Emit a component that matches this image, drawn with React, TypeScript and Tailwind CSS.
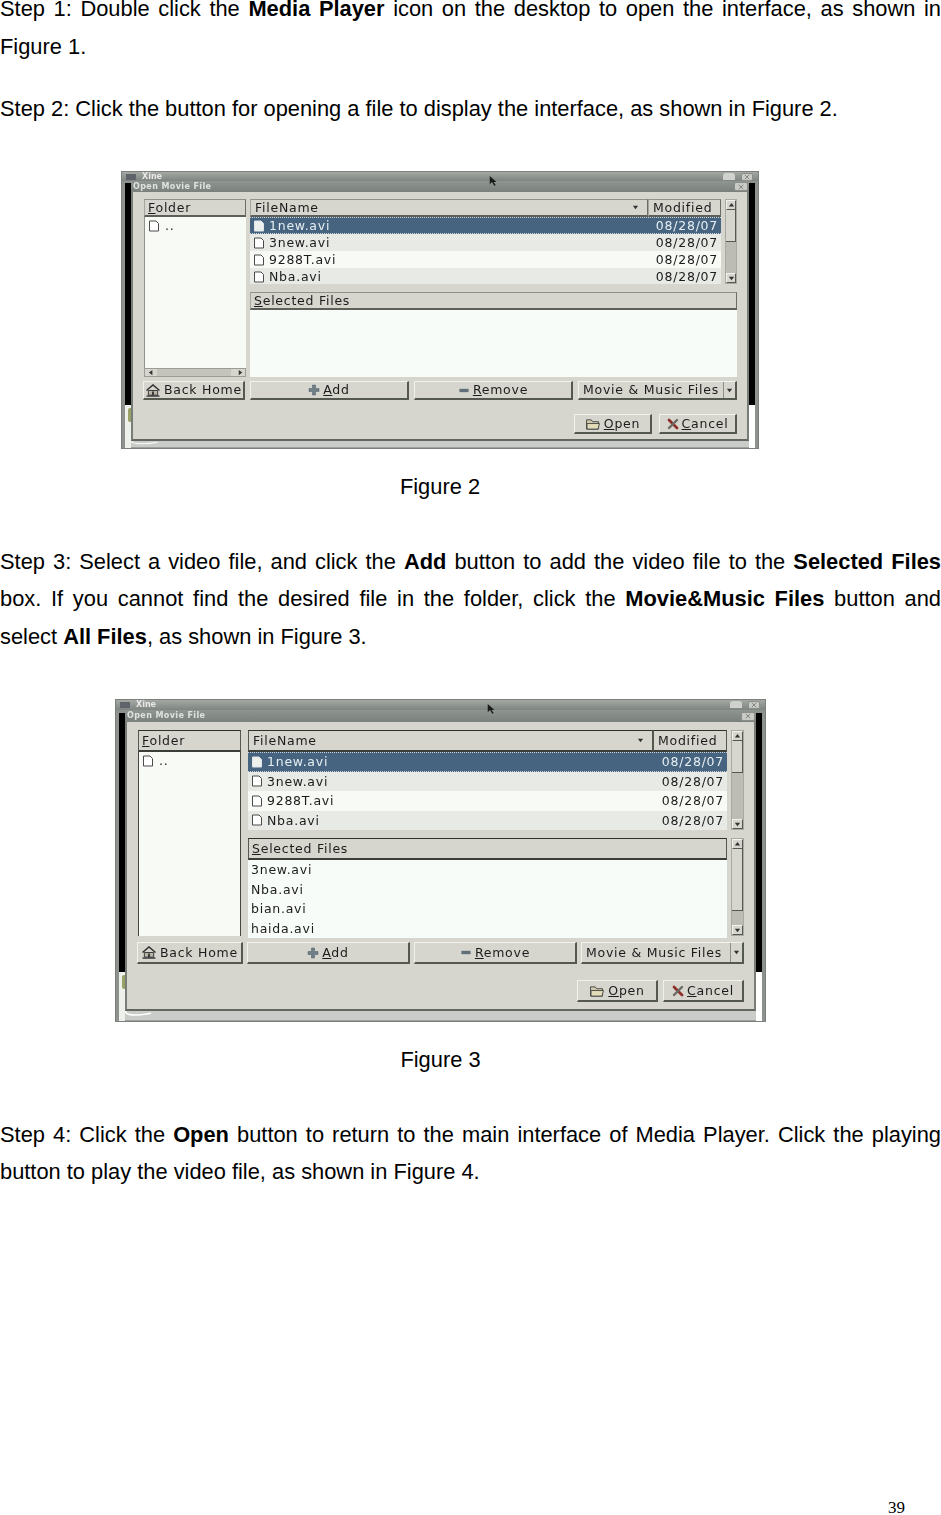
import type { ReactNode } from 'react'

type FigureStyle = {
  frame: string
  xineBar: string
  xineButtons: string
  titleBar: string
  body: string
  columns: string
  folderCol: string
  header: string
  headerCell: string
  listEdge: string
  row: string
  fileList: string
  modifiedCol: string
  upperPane: string
  lowerPane: string
  buttonRow: string
  backHome: string
  wideButton: string
  footer: string
  footerButton: string
  scrollbar: string
  strip: string
  paneGap: string
  bottomBand: string
}

const figureTwo: FigureStyle = {
  frame: 'w-[638px] h-[278px]',
  xineBar: 'h-[9px] pr-[5px]',
  xineButtons: 'gap-[6px]',
  titleBar: 'h-[11px] pr-[1px]',
  body: 'pl-[11px] pr-[10px] pt-[7px]',
  columns: 'gap-[4px]',
  folderCol: 'w-[102px]',
  header: 'h-[18px]',
  headerCell:
    'border-t border-l border-t-[#8f918a] border-l-[#a5a79f] border-r border-b-2 border-r-[#6a6d66] border-b-[#5d6059] bg-[#d6d5ce]',
  listEdge: 'border-l border-[#8f918a]',
  row: 'h-[17px]',
  fileList: 'w-[471px]',
  modifiedCol: 'w-[73px]',
  upperPane: 'h-[85px]',
  lowerPane: 'h-[85px]',
  buttonRow: 'h-[19px] mt-[4px] -ml-[1px] gap-[5px]',
  backHome: 'w-[102px]',
  wideButton: 'w-[159px]',
  footer: 'mt-[14px] gap-[7px]',
  footerButton: 'w-[78px] h-[20px]',
  scrollbar: 'w-[12px]',
  strip: 'mt-[2px] h-[222px]',
  paneGap: 'gap-[8px]',
  bottomBand: 'h-[7px]',
}

const figureThree: FigureStyle = {
  frame: 'w-[651px] h-[323px]',
  xineBar: 'h-[10px] pr-[5px]',
  xineButtons: 'gap-[6px]',
  titleBar: 'h-[12px] pr-[1px]',
  body: 'pl-[11px] pr-[10px] pt-[8px]',
  columns: 'gap-[7px]',
  folderCol: 'w-[103px]',
  header: 'h-[22px]',
  headerCell:
    'border-t border-l border-t-[#2f312d] border-l-[#55584f] border-r border-b-2 border-r-[#55584f] border-b-[#3a3d38] bg-[#d6d5ce]',
  listEdge: 'border-x border-[#44473f]',
  row: 'h-[19.5px]',
  fileList: 'w-[479px]',
  modifiedCol: 'w-[74px]',
  upperPane: 'h-[100px]',
  lowerPane: 'h-[98px]',
  buttonRow: 'h-[22px] mt-[6px] -ml-[1px] gap-[4px]',
  backHome: 'w-[106px]',
  wideButton: 'w-[163px]',
  footer: 'mt-[16px] gap-[5px]',
  footerButton: 'w-[81px] h-[22px]',
  scrollbar: 'w-[13px]',
  strip: 'mt-[3px] h-[259px]',
  paneGap: 'gap-[8px]',
  bottomBand: 'h-[10px]',
}

const raised = 'border-t border-l border-t-[#f2f2ec] border-l-[#f2f2ec] border-r-2 border-b-2 border-r-[#55584f] border-b-[#55584f]'

function DocIcon({ light }: { light?: boolean }) {
  return (
    <svg viewBox="0 0 12 12" className="size-[12px] shrink-0">
      <path
        d="M1.5 1h6.5l2.5 2.5V11h-9z"
        fill={light ? '#eef0ee' : '#ffffff'}
        stroke={light ? '#dfe5e8' : '#4a4a4a'}
        strokeWidth="1"
      />
    </svg>
  )
}

function HomeIcon() {
  return (
    <svg viewBox="0 0 16 14" className="h-[13px] w-[16px] shrink-0">
      <path d="M1 7L8 1l7 6" fill="none" stroke="#333" strokeWidth="1.6" />
      <path d="M3 7h10v5H3z" fill="#b9b6a8" stroke="#333" />
      <path d="M1 13h14" stroke="#333" strokeWidth="1.4" />
      <path d="M7 8h2v4H7z" fill="#333" />
    </svg>
  )
}

function PlusIcon() {
  return (
    <svg viewBox="0 0 12 12" className="size-[12px] shrink-0">
      <path d="M4.5 1h3v3.5H11v3H7.500V11h-3V7.500H1v-3h3.500z" fill="#6f8088" stroke="#4d5a60" strokeWidth="0.5" />
    </svg>
  )
}

function MinusIcon() {
  return (
    <svg viewBox="0 0 12 6" className="h-[5px] w-[12px] shrink-0">
      <path d="M0.500 1h11v4H0.500z" fill="#5f6f78" />
    </svg>
  )
}

function FolderIcon() {
  return (
    <svg viewBox="0 0 16 13" className="h-[12px] w-[16px] shrink-0">
      <path d="M1 2h5l1.500 2H14v8H1z" fill="#cfc9a8" stroke="#444" />
      <path d="M1.500 6H15l-1.500 6H1.500z" fill="#e3dcb8" stroke="#444" />
    </svg>
  )
}

function CancelIcon() {
  return (
    <svg viewBox="0 0 12 12" className="size-[12px] shrink-0">
      <path d="M2 2l8 8" stroke="#8f2f2a" strokeWidth="2.800" strokeLinecap="round" />
      <path d="M10 2l-8 8" stroke="#6b6b68" strokeWidth="2.400" strokeLinecap="round" />
    </svg>
  )
}

function WindowClose({ className }: { className: string }) {
  return (
    <span className={`flex items-center justify-center rounded-[2px] border border-[#8a8d88] bg-[#c9cbc6] ${className}`}>
      <svg viewBox="0 0 8 8" className="size-[6px]">
        <path d="M1 1l6 6M7 1L1 7" stroke="#7c7f7a" strokeWidth="1.200" />
      </svg>
    </span>
  )
}

function Arrow({ direction }: { direction: 'up' | 'down' | 'left' | 'right' }) {
  const paths = { up: 'M1 5l3-4 3 4z', down: 'M1 2h6L4 6z', left: 'M5 1L1 4l4 3z', right: 'M2 1l4 3-4 3z' }
  return (
    <svg viewBox="0 0 8 8" className="size-[7px]">
      <path d={paths[direction]} fill="#333" />
    </svg>
  )
}

function VerticalScrollbar({ s, thumb, trackFill }: { s: FigureStyle; thumb: string; trackFill: string }) {
  return (
    <div className={`flex shrink-0 flex-col ${s.scrollbar} border border-[#a9aaa3]`}>
      <div className={`flex h-[10px] items-center justify-center ${raised} !border-r !border-b`}>
        <Arrow direction="up" />
      </div>
      <div className={`${thumb} bg-[#d6d5ce] border-r border-b border-[#55584f]`} />
      <div className={`flex-1 ${trackFill}`} />
      <div className={`flex h-[10px] items-center justify-center ${raised} !border-r !border-b`}>
        <Arrow direction="down" />
      </div>
    </div>
  )
}

function UnderlinedLabel({ first, rest }: { first: string; rest: string }) {
  return (
    <span>
      <span className="underline underline-offset-1">{first}</span>
      {rest}
    </span>
  )
}

function ActionButton({ className, children }: { className: string; children: ReactNode }) {
  return <div className={`flex shrink-0 items-center justify-center gap-[3px] bg-[#d6d5ce] ${raised} ${className}`}>{children}</div>
}

const files = ['1new.avi', '3new.avi', '9288T.avi', 'Nba.avi']
const rowTints = ['border-y border-dotted border-[#c9d4dc] bg-[#466480] text-[#e6eef2]', 'bg-[#e8eae6]', 'bg-[#f8faf6]', 'bg-[#e8eae6]']

function OpenFileDialog({ s, selected, cursorClass }: { s: FigureStyle; selected: string[]; cursorClass: string }) {
  return (
    <figure
      className={`relative mx-auto flex flex-col border border-[#7b807c] bg-[#8d928e] font-['DejaVu_Sans',sans-serif] text-[12.5px] tracking-[0.75px] text-[#1c1c1c] blur-[0.35px] ${s.frame}`}
    >
      {/* window behind the dialog */}
      <div className={`flex items-center justify-between bg-gradient-to-b from-[#a4a9a4] to-[#7e8480] pl-[4px] ${s.xineBar}`}>
        <span className="flex items-center gap-[6px] text-[8px] font-bold leading-none tracking-normal text-[#e8e8e8]">
          <span className="h-[6px] w-[10px] bg-[#60646a]" />
          Xine
        </span>
        <span className={`flex ${s.xineButtons}`}>
          <span className="h-[7px] w-[12px] rounded-t-[3px] bg-[#d0d2cd]" />
          <WindowClose className="h-[8px] w-[12px]" />
        </span>
      </div>
      <svg viewBox="0 0 12 14" className={`absolute top-[3px] h-[11px] w-[9px] ${cursorClass}`}>
        <path d="M1 1l9 8H6l3 4-2 1-3-5-3 3z" fill="#1a1a1a" />
      </svg>

      <div className="flex min-h-0 flex-1 pl-[3px] pr-[3px]">
        <div className="flex w-[6px] shrink-0 flex-col">
          <div className={`bg-black ${s.strip}`} />
          <div className="flex-1 bg-[#eef0ec] pr-[3px]">
            <div className="ml-[3px] mt-[3px] h-[14px] w-[3px] rounded-l-[2px] bg-[#98a268]" />
          </div>
        </div>

        <div className="flex min-w-0 flex-1 flex-col">
          <div className={`flex items-center justify-between bg-gradient-to-b from-[#8f9590] to-[#7a807c] pl-[2px] ${s.titleBar}`}>
            <span className="text-[8px] font-bold leading-none tracking-[0.4px] text-[#dfe3df]">Open Movie File</span>
            <WindowClose className="h-[9px] w-[14px]" />
          </div>
          <div className="flex flex-1 flex-col border-x-2 border-b-2 border-x-[#797d78] border-b-[#62665f] bg-[#d6d5ce]">
            <div className={`flex flex-col ${s.body}`}>
              <div className={`flex ${s.columns}`}>
                <div className={`flex shrink-0 flex-col ${s.folderCol}`}>
                  <div className={`flex items-center pl-[3px] ${s.headerCell} ${s.header}`}>
                    <UnderlinedLabel first="F" rest="older" />
                  </div>
                  <div className={`flex flex-1 items-start gap-[5px] bg-[#f8faf6] px-[3px] pt-[3px] ${s.listEdge}`}>
                    <DocIcon />
                    <span className="leading-[12px]">..</span>
                  </div>
                  {s === figureTwo ? (
                    <div className="flex h-[9px] items-center justify-between border border-[#9b9c95] bg-[#c4c4bd]">
                      <span className="flex h-full w-[12px] items-center justify-center bg-[#d6d5ce]">
                        <Arrow direction="left" />
                      </span>
                      <span className="ml-auto h-full w-[4px] bg-[#d6d5ce]" />
                      <span className="flex h-full w-[10px] items-center justify-center bg-[#d6d5ce]">
                        <Arrow direction="right" />
                      </span>
                    </div>
                  ) : null}
                </div>

                <div className={`flex min-w-0 flex-1 flex-col ${s.paneGap}`}>
                  <div className={`flex justify-between ${s.upperPane}`}>
                    <div className={`flex shrink-0 flex-col overflow-hidden ${s.fileList}`}>
                      <div className={`flex shrink-0 ${s.header}`}>
                        <div className={`flex flex-1 items-center justify-between pl-[4px] pr-[8px] ${s.headerCell}`}>
                          FileName
                          <Arrow direction="down" />
                        </div>
                        <div className={`flex shrink-0 items-center pl-[4px] ${s.headerCell} ${s.modifiedCol}`}>Modified</div>
                      </div>
                      {files.map((name, i) => (
                        <div key={name} className={`flex shrink-0 items-center justify-between pl-[3px] pr-[3px] ${s.row} ${rowTints[i]}`}>
                          <span className="flex items-center gap-[4px]">
                            <DocIcon light={i === 0} />
                            {name}
                          </span>
                          <span>08/28/07</span>
                        </div>
                      ))}
                    </div>
                    <VerticalScrollbar s={s} thumb="h-[32px]" trackFill="bg-[#bcbcb5]" />
                  </div>

                  <div className={`flex justify-between ${s.lowerPane}`}>
                    <div className={`flex flex-1 flex-col ${s === figureThree ? 'mr-[4px]' : ''}`}>
                      <div className={`flex shrink-0 items-center pl-[3px] ${s.headerCell} ${s.header}`}>
                        <UnderlinedLabel first="S" rest="elected Files" />
                      </div>
                      <div className="flex-1 bg-[#f8fcf8]">
                        {selected.map((name) => (
                          <div key={name} className={`flex items-center pl-[3px] ${s.row}`}>
                            {name}
                          </div>
                        ))}
                      </div>
                    </div>
                    {s === figureThree ? <VerticalScrollbar s={s} thumb="h-[62px]" trackFill="bg-[#bcbcb5]" /> : null}
                  </div>
                </div>
              </div>

              <div className={`flex ${s.buttonRow}`}>
                <ActionButton className={s.backHome}>
                  <HomeIcon />
                  Back Home
                </ActionButton>
                <ActionButton className={s.wideButton}>
                  <PlusIcon />
                  <UnderlinedLabel first="A" rest="dd" />
                </ActionButton>
                <ActionButton className={s.wideButton}>
                  <MinusIcon />
                  <UnderlinedLabel first="R" rest="emove" />
                </ActionButton>
                <ActionButton className={`${s.wideButton} !justify-between whitespace-nowrap pl-[4px] pr-[2px]`}>
                  Movie &amp; Music Files
                  <span className="flex h-full items-center border-l border-[#8c8f88] pl-[2px]">
                    <Arrow direction="down" />
                  </span>
                </ActionButton>
              </div>

              <div className={`flex justify-end ${s.footer}`}>
                <ActionButton className={s.footerButton}>
                  <FolderIcon />
                  <UnderlinedLabel first="O" rest="pen" />
                </ActionButton>
                <ActionButton className={s.footerButton}>
                  <CancelIcon />
                  <UnderlinedLabel first="C" rest="ancel" />
                </ActionButton>
              </div>
            </div>
          </div>
          <div className={`flex shrink-0 border-b border-[#9da19c] bg-[#c9ccc8] ${s.bottomBand}`}>
            <svg viewBox="0 0 30 8" preserveAspectRatio="none" className="h-full w-[28px]">
              <path d="M0 0Q2 6 28 2" fill="none" stroke="#ffffff" strokeWidth="1.500" />
            </svg>
          </div>
        </div>

        <div className="flex w-[6px] shrink-0 flex-col">
          <div className={`bg-black ${s.strip}`} />
          <div className="flex-1 bg-white" />
        </div>
      </div>
    </figure>
  )
}

function Caption({ children }: { children: ReactNode }) {
  return <p className="text-center">{children}</p>
}

export default function App() {
  return (
    <div className="flex h-[1515px] w-[941px] flex-col overflow-hidden bg-white font-['Liberation_Sans',Arial,sans-serif] text-[21.85px] leading-[37.5px] text-black">
      <p className="-mt-[10px] text-justify">
        Step 1: Double click the <b>Media Player</b> icon on the desktop to open the interface, as shown in Figure 1.
      </p>
      <p className="mt-[24.5px] text-justify">
        Step 2: Click the button for opening a file to display the interface, as shown in Figure 2.
      </p>

      <div className="mt-[44px] flex flex-col pr-[61px]">
        <OpenFileDialog s={figureTwo} selected={[]} cursorClass="left-[367px]" />
        <div className="mt-[19px]">
          <Caption>Figure 2</Caption>
        </div>
      </div>

      <p className="mt-[37px] text-justify">
        Step 3: Select a video file, and click the <b>Add</b> button to add the video file to the <b>Selected Files</b> box. If you
        cannot find the desired file in the folder, click the <b>Movie&amp;Music Files</b> button and select <b>All Files</b>, as
        shown in Figure 3.
      </p>

      <div className="mt-[44px] flex flex-col pr-[60px]">
        <OpenFileDialog s={figureThree} selected={['3new.avi', 'Nba.avi', 'bian.avi', 'haida.avi']} cursorClass="left-[371px]" />
        <div className="mt-[19px]">
          <Caption>Figure 3</Caption>
        </div>
      </div>

      <p className="mt-[37px] text-justify">
        Step 4: Click the <b>Open</b> button to return to the main interface of Media Player. Click the playing button to play the
        video file, as shown in Figure 4.
      </p>

      <p className="mt-auto pb-[1px] pr-[36px] text-right font-['Liberation_Serif',serif] text-[17px] leading-[12px]">39</p>
    </div>
  )
}
